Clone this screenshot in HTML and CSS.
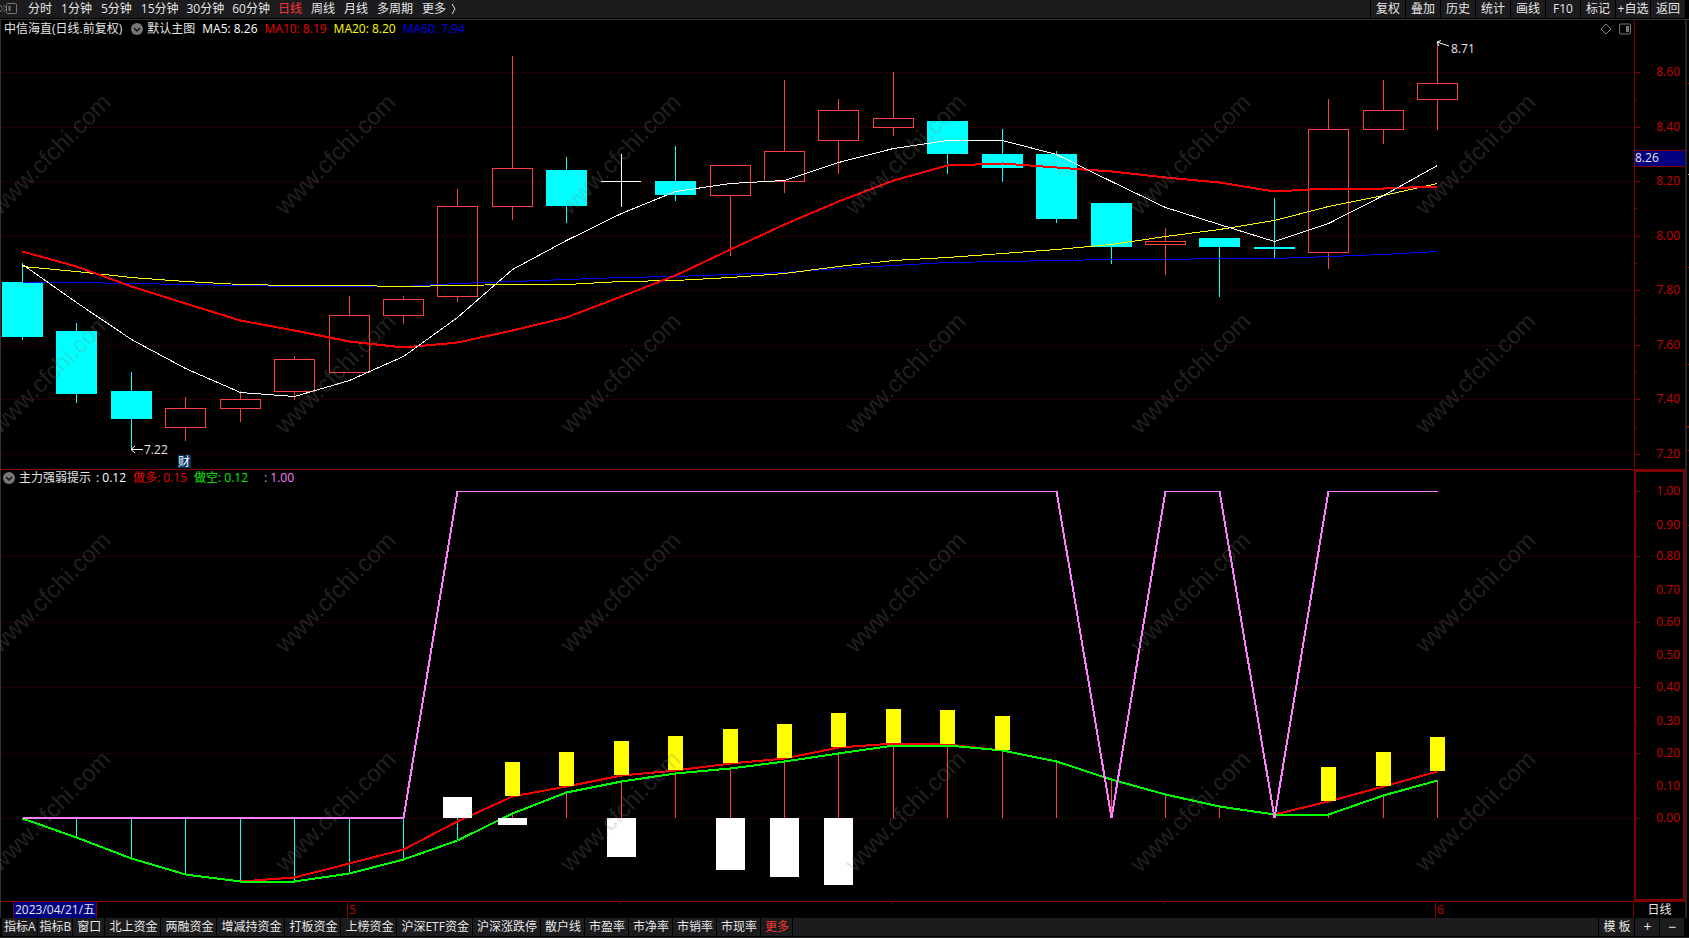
FILE: index.html
```html
<!DOCTYPE html>
<html lang="zh-CN">
<head>
    <meta charset="UTF-8">
    <meta name="viewport" content="width=device-width, initial-scale=1.0">
    <title>中信海直 日线</title>
    <link rel="stylesheet" href="styles.css">
</head>
<body>
    <div class="app">
        <header class="topbar">
            <button class="dock-btn" aria-label="展开侧栏">
                <svg width="18" height="14" viewBox="0 0 18 14" fill="none" stroke="#777">
                    <path d="M0 3l3 3.500-3 3.500M3.500 3l3 3.500-3 3.500"/>
                    <rect x="6.500" y="1.500" width="10" height="10" rx="1"/>
                    <path d="M9.500 4v5" stroke-width="2"/>
                </svg>
            </button>
            <nav class="periods">
                <button>分时</button>
                <button>1分钟</button>
                <button>5分钟</button>
                <button class="wide">15分钟</button>
                <button class="wide">30分钟</button>
                <button class="wide">60分钟</button>
                <button class="active">日线</button>
                <button>周线</button>
                <button>月线</button>
                <button>多周期</button>
                <button class="more">更多
                    <svg width="6" height="10" viewBox="0 0 6 10" fill="none" stroke="#ddd"><path d="M1 0l3 5-3 5"/></svg>
                </button>
            </nav>
            <div class="tools">
                <button>复权</button>
                <button>叠加</button>
                <button>历史</button>
                <button>统计</button>
                <button>画线</button>
                <button>F10</button>
                <button>标记</button>
                <button>+自选</button>
                <button>返回</button>
            </div>
        </header>

        <div class="workspace">
            <main class="panels">
                <section class="panel price-panel">
                    <div class="plot" id="price-plot">
                        <div class="legend">
                            <span class="stock">中信海直(日线.前复权)</span>
                            <button class="toggle" aria-label="主图指标">
                                <svg width="12" height="12" viewBox="0 0 12 12"><circle cx="6" cy="6" r="6" fill="#777"/><path d="M3 5l3 3 3-3" fill="none" stroke="#111" stroke-width="1.500"/></svg>
                            </button>
                            <span class="name">默认主图</span>
                            <span class="white">MA5: 8.26</span>
                            <span class="red">MA10: 8.19</span>
                            <span class="yellow">MA20: 8.20</span>
                            <span class="blue">MA60: 7.94</span>
                        </div>
                        <div class="plot-icons">
                            <button aria-label="标记点">
                                <svg width="12" height="12" viewBox="0 0 12 12" fill="none" stroke="#888"><path d="M6 1l5 5-5 5-5-5z"/></svg>
                            </button>
                            <button aria-label="侧栏">
                                <svg width="12" height="12" viewBox="0 0 12 12" fill="none" stroke="#777"><rect x=".5" y="1" width="11" height="10" rx="1"/><path d="M8.500 3v6" stroke-width="3"/></svg>
                            </button>
                        </div>
                    </div>
                    <div class="axis" id="price-axis"></div>
                </section>

                <section class="panel signal-panel">
                    <div class="plot" id="signal-plot">
                        <div class="legend signal-legend">
                            <button class="toggle" aria-label="副图指标">
                                <svg width="12" height="12" viewBox="0 0 12 12"><circle cx="6" cy="6" r="6" fill="#777"/><path d="M3 5l3 3 3-3" fill="none" stroke="#111" stroke-width="1.500"/></svg>
                            </button>
                            <span class="name">主力强弱提示</span>
                            <span class="white">: 0.12</span>
                            <span class="red">做多: 0.15</span>
                            <span class="green">做空: 0.12</span>
                            <span class="pink">: 1.00</span>
                        </div>
                    </div>
                    <div class="axis" id="signal-axis"></div>
                </section>

                <div class="date-row">
                    <div class="dates" id="dates">
                        <span class="cursor-date">2023/04/21/五</span>
                    </div>
                    <div class="period-label">日线</div>
                </div>
            </main>
            <aside class="edge" id="edge"></aside>
        </div>

        <footer class="bottombar">
            <button class="tight">指标A</button>
            <button class="tight">指标B</button>
            <button>窗口</button>
            <button>北上资金</button>
            <button>两融资金</button>
            <button>增减持资金</button>
            <button>打板资金</button>
            <button>上榜资金</button>
            <button>沪深ETF资金</button>
            <button>沪深涨跌停</button>
            <button>散户线</button>
            <button>市盈率</button>
            <button>市净率</button>
            <button>市销率</button>
            <button>市现率</button>
            <button class="active">更多</button>
            <span class="filler"></span>
            <button class="template">模 板</button>
            <button class="zoom" aria-label="放大">+</button>
            <button class="zoom" aria-label="缩小">−</button>
        </footer>

        <svg class="watermark" aria-hidden="true">
            <defs>
                <pattern id="mark" x="-15" y="2" width="285" height="219" patternUnits="userSpaceOnUse">
                    <text x="15" y="214" transform="rotate(-45 15 214)">www.cfchi.com</text>
                </pattern>
            </defs>
            <rect width="100%" height="100%" fill="url(#mark)"/>
        </svg>
    </div>

    <script src="chart.js"></script>
</body>
</html>
```

FILE: styles.css
```css
* {
    box-sizing: border-box;
}
body {
    margin: 0;
    background-color: #000;
    color: #e6e6e6;
    font-family: "Open Sans", "Noto Sans CJK SC", sans-serif;
    font-size: 12px;
    line-height: 16px;
}
button {
    margin: 0;
    padding: 0;
    border: none;
    background: none;
    color: inherit;
    font: inherit;
    white-space: nowrap;
    cursor: pointer;
}
button:hover {
    color: #fff;
}
.app {
    position: relative;
    display: flex;
    flex-direction: column;
    height: 100vh;
    overflow: hidden;
}

/* top toolbar */
.topbar {
    display: flex;
    height: 20px;
    padding-bottom: 1px;
    border-bottom: 1px solid #333;
}
.dock-btn {
    display: flex;
    align-items: center;
    width: 24px;
    background-color: #1c1c1e;
}
.periods {
    display: flex;
    flex: 1;
    background-color: #1c1c1e;
}
.periods button {
    padding: 0 4px;
    margin-right: 1px;
}
.periods .wide {
    margin-right: 0;
}
.periods .more {
    display: flex;
    align-items: center;
    gap: 5px;
}
.periods .active,
.bottombar .active {
    color: #ff3434;
}
.tools {
    display: flex;
    gap: 1px;
    padding-left: 1px;
    margin-right: 4px;
}
.tools button {
    width: 34px;
    background-color: #1c1c1e;
}

/* charts */
.workspace {
    display: flex;
    flex: 1;
    min-height: 0;
}
.panels {
    display: grid;
    grid-template-rows: minmax(0, 449fr) minmax(0, 433fr) 16px;
    flex: 1;
    min-width: 0;
    border-left: 1px solid #333;
}
.panel {
    display: grid;
    grid-template-columns: minmax(0, 1fr) 51px;
    min-height: 0;
}
.plot {
    position: relative;
    overflow: hidden;
}
.plot > svg,
.axis > svg {
    display: block;
}
.axis {
    overflow: hidden;
}
.price-panel .axis {
    border-left: 1px solid #800000;
}
.signal-panel {
    border-top: 1px solid #800000;
    border-bottom: 1px solid #800000;
}
.signal-panel .axis {
    box-shadow: inset 0 0 0 2px #800000;
}
.legend {
    position: absolute;
    top: 1px;
    left: 3px;
    display: flex;
    align-items: center;
    gap: 7px;
    white-space: nowrap;
}
.legend .stock {
    margin-right: 2px;
}
.legend .name {
    margin-left: -3px;
}
.signal-legend {
    top: 0;
    left: 2px;
}
.signal-legend .white {
    margin-left: -2px;
}
.signal-legend .pink {
    margin-left: 9px;
}
.toggle,
.plot-icons button {
    display: flex;
}
.white { color: #fff; }
.red { color: #f00000; }
.yellow { color: #ffff00; }
.blue { color: #0000e6; }
.green { color: #00f000; }
.pink { color: #ff80ff; }
.plot-icons {
    position: absolute;
    top: 3px;
    right: 3px;
    display: flex;
    gap: 7px;
}
svg text {
    font-size: 12px;
}
.axis-text {
    fill: #cc0000;
    text-anchor: end;
}
.note {
    fill: #e6e6e6;
}

/* date row */
.date-row {
    display: grid;
    grid-template-columns: minmax(0, 1fr) 51px;
}
.dates {
    position: relative;
    border-right: 1px solid #800000;
}
.cursor-date {
    display: inline-block;
    margin-left: 12px;
    padding: 0 1px;
    background-color: #000080;
    border-left: 1px solid #800000;
    border-right: 1px solid #800000;
}
.dates svg {
    position: absolute;
    inset: 0;
}
.month {
    fill: #cc0000;
}
.period-label {
    text-align: center;
}
.edge {
    width: 4px;
    border-left: 2px solid #252525;
}

/* bottom toolbar */
.bottombar {
    display: flex;
    gap: 1px;
    height: 20px;
    padding: 0 5px 1px 2px;
    border-bottom: 1px solid #2a2a2a;
}
.bottombar button,
.filler {
    background-color: #1c1c1e;
    padding: 0 3px 0 4px;
}
.bottombar .tight {
    padding: 0 1px 0 2px;
}
.bottombar .filler {
    flex: 1;
}
.bottombar .template {
    width: 35px;
}
.bottombar .zoom {
    width: 24px;
    font-size: 14px;
}

.watermark {
    position: absolute;
    inset: 0;
    width: 100%;
    height: 100%;
    pointer-events: none;
}
.watermark text {
    font-family: "Liberation Sans", Arial, sans-serif;
    font-size: 24px;
    fill: rgba(128, 128, 128, 0.25);
}
```

FILE: chart.js
```javascript
// open, close, high, low
const candles = [
    [7.83, 7.63, 7.90, 7.62], [7.65, 7.42, 7.68, 7.39], [7.43, 7.33, 7.50, 7.22],
    [7.30, 7.37, 7.41, 7.25], [7.37, 7.40, 7.43, 7.32], [7.43, 7.55, 7.56, 7.40],
    [7.50, 7.71, 7.78, 7.50], [7.71, 7.77, 7.78, 7.68], [7.78, 8.11, 8.17, 7.76],
    [8.11, 8.25, 8.66, 8.06], [8.24, 8.11, 8.29, 8.05], [8.20, 8.20, 8.30, 8.11],
    [8.20, 8.15, 8.33, 8.13], [8.15, 8.26, 8.26, 7.93], [8.20, 8.31, 8.57, 8.16],
    [8.35, 8.46, 8.50, 8.23], [8.40, 8.43, 8.60, 8.37], [8.42, 8.30, 8.42, 8.23],
    [8.30, 8.25, 8.39, 8.20], [8.30, 8.06, 8.31, 8.05], [8.12, 7.96, 8.12, 7.90],
    [7.97, 7.98, 8.03, 7.86], [7.99, 7.96, 7.99, 7.78], [7.96, 7.95, 8.14, 7.92],
    [7.94, 8.39, 8.50, 7.88], [8.39, 8.46, 8.57, 8.34], [8.50, 8.56, 8.71, 8.39]
];

const ma5 = [7.897, 7.757, 7.622, 7.515, 7.427, 7.413, 7.471, 7.559, 7.702, 7.878, 7.984, 8.083, 8.164, 8.193,
    8.204, 8.27, 8.322, 8.351, 8.351, 8.30, 8.20, 8.105, 8.043, 7.981, 8.047, 8.149, 8.26];
const ma10 = [7.944, 7.889, 7.816, 7.754, 7.691, 7.655, 7.614, 7.592, 7.611, 7.655, 7.702, 7.779, 7.856, 7.951,
    8.043, 8.127, 8.204, 8.259, 8.267, 8.252, 8.237, 8.215, 8.197, 8.164, 8.175, 8.175, 8.182];
const ma20 = [7.889, 7.871, 7.849, 7.834, 7.823, 7.819, 7.819, 7.816, 7.819, 7.823, 7.823, 7.834, 7.839, 7.849,
    7.863, 7.889, 7.911, 7.922, 7.937, 7.951, 7.97, 7.999, 8.025, 8.058, 8.109, 8.149, 8.193];
const ma60 = [7.83, 7.83, 7.827, 7.823, 7.819, 7.816, 7.816, 7.816, 7.827, 7.834, 7.841, 7.849, 7.852, 7.86,
    7.867, 7.882, 7.893, 7.904, 7.907, 7.911, 7.915, 7.915, 7.918, 7.918, 7.926, 7.933, 7.944];

const shortLine = [0, -.058, -.122, -.171, -.193, -.194, -.168, -.125, -.067, .015, .08, .113, .138, .153,
    .174, .199, .223, .223, .208, .173, .119, .072, .038, .012, .012, .07, .116];
const longLine = [0, -.058, -.122, -.171, -.193, -.18, -.138, -.095, -.009, .067, .098, .132, .147, .167,
    .183, .217, .229, .226, .208, .173, .119, .072, .038, .012, .052, .098, .144];
const state = [0, 0, 0, 0, 0, 0, 0, 0, 1, 1, 1, 1, 1, 1, 1, 1, 1, 1, 1, 1, 0, 1, 1, 0, 1, 1, 1];
const yellowBars = [9, 10, 11, 12, 13, 14, 15, 16, 17, 18, 24, 25, 26];
const whiteBars = { 8: .064, 9: -.021, 11: -.119, 13: -.159, 14: -.18, 15: -.205 };

const UP = '#ff4040';
const DOWN = '#00ffff';
const LINE = '#800000';

function makeSvg(host) {
    const old = host.querySelector(':scope > svg');
    if (old) old.remove();
    const svg = document.createElementNS('http://www.w3.org/2000/svg', 'svg');
    svg.setAttribute('width', host.clientWidth);
    svg.setAttribute('height', host.clientHeight);
    host.prepend(svg);
    return svg;
}

function add(svg, tag, attrs, text) {
    const el = document.createElementNS('http://www.w3.org/2000/svg', tag);
    for (const key in attrs) el.setAttribute(key, attrs[key]);
    if (text !== undefined) el.textContent = text;
    svg.appendChild(el);
    return el;
}

function box(svg, x, y, width, height, fill) {
    add(svg, 'rect', { x, y, width, height, fill });
}

function gridLine(svg, y, width) {
    add(svg, 'line', { x1: 1, x2: width, y1: y + 0.5, y2: y + 0.5, stroke: LINE, 'stroke-dasharray': '1 3' });
}

function curve(svg, values, y, width, stroke, size) {
    const points = values.map((v, i) => xAt(i, width) + 0.5 + ',' + (y(v) + 0.5)).join(' ');
    add(svg, 'polyline', { points, stroke, fill: 'none', 'stroke-width': size, 'shape-rendering': 'crispEdges' });
}

function xAt(i, width) {
    return Math.round(21 + i * width / 30.003);
}

function scale(max, min, height) {
    return v => Math.round((max - v) / (max - min) * height);
}

function drawPrice() {
    const host = document.getElementById('price-plot');
    const svg = makeSvg(host);
    const w = host.clientWidth;
    const y = scale(8.7905, 7.1453, host.clientHeight);

    for (let i = 0; i < 8; i++) gridLine(svg, y(7.2 + i * 0.2), w);

    candles.forEach(([open, close, high, low], i) => {
        const x = xAt(i, w);
        const top = y(Math.max(open, close));
        const bottom = y(Math.min(open, close));
        if (open === close) {
            box(svg, x, y(high), 1, y(low) - y(high) + 1, '#fff');
            box(svg, x - 20, top, 40, 1, '#fff');
        } else if (close > open) {
            box(svg, x, y(high), 1, top - y(high), UP);
            box(svg, x, bottom, 1, y(low) - bottom + 1, UP);
            add(svg, 'rect', { x: x - 19.5, y: top + 0.5, width: 40, height: bottom - top, fill: 'none', stroke: UP });
        } else {
            box(svg, x, y(high), 1, y(low) - y(high) + 1, DOWN);
            box(svg, x - 20, top, 41, bottom - top, DOWN);
        }
    });

    curve(svg, ma60, y, w, '#0000ff', 1);
    curve(svg, ma20, y, w, '#ffff00', 1);
    curve(svg, ma10, y, w, '#ff0000', 2);
    curve(svg, ma5, y, w, '#ffffff', 1);

    // lowest and highest price notes
    const lx = xAt(2, w), ly = y(7.22);
    add(svg, 'path', { d: `M${lx + 12} ${ly + 0.5}H${lx}M${lx + 4} ${ly - 3}l-4 3.5 4 3.5`, stroke: '#fff', fill: 'none' });
    add(svg, 'text', { x: lx + 13, y: ly + 5, class: 'note' }, '7.22');
    const hx = xAt(26, w), hy = y(8.71);
    add(svg, 'path', { d: `M${hx + 12} ${hy + 4}L${hx} ${hy}M${hx + 4} ${hy - 1.5}L${hx} ${hy}l2 4`, stroke: '#fff', fill: 'none' });
    add(svg, 'text', { x: hx + 14, y: hy + 11, class: 'note' }, '8.71');

    const fx = xAt(3, w);
    box(svg, fx - 7, y(7.2) + 1, 13, 13, '#003366');
    add(svg, 'text', { x: fx - 7, y: y(7.2) + 12, fill: '#fff' }, '财');

    const axisHost = document.getElementById('price-axis');
    const axis = makeSvg(axisHost);
    for (let i = 0; i < 8; i++) {
        const value = 7.2 + i * 0.2;
        box(axis, 0, y(value), 5, 1, LINE);
        if (i < 7) box(axis, 0, y(value + 0.1), 2, 1, LINE);
        add(axis, 'text', { x: 45, y: y(value) + 4, class: 'axis-text' }, value.toFixed(2));
    }
    const last = y(8.26);
    box(axis, 0, last - 15, 50, 17, LINE);
    box(axis, 0, last - 14, 50, 15, '#000080');
    add(axis, 'text', { x: 0, y: last - 3, class: 'note' }, '8.26');
}

function drawSignal() {
    const host = document.getElementById('signal-plot');
    const svg = makeSvg(host);
    const w = host.clientWidth;
    const y = scale(1.0642, -0.2538, host.clientHeight);
    const zero = y(0);

    for (let i = 0; i < 5; i++) gridLine(svg, y(i * 0.2), w);

    shortLine.forEach((v, i) => {
        const top = Math.min(zero, y(v));
        box(svg, xAt(i, w), top, 1, Math.abs(y(v) - zero), v < 0 ? DOWN : UP);
    });

    curve(svg, longLine, y, w, '#ff0000', 2);
    curve(svg, shortLine, y, w, '#00ff00', 2);

    for (const i in whiteBars) {
        const v = whiteBars[i];
        box(svg, xAt(+i, w) - 14, Math.min(zero, y(v)), 29, Math.abs(y(v) - zero), '#fff');
    }
    for (const i of yellowBars) {
        const bottom = y(longLine[i]);
        box(svg, xAt(i, w) - 7, y(longLine[i] + 0.104), 15, bottom - y(longLine[i] + 0.104), '#ffff00');
    }
    // pink line is doubled where it rises, falls or rests on zero
    for (let i = 1; i < state.length; i++) {
        const flatTop = state[i] && state[i - 1];
        add(svg, 'line', {
            x1: xAt(i - 1, w) + 0.5, y1: y(state[i - 1]) + (flatTop ? 0.5 : 0),
            x2: xAt(i, w) + 0.5, y2: y(state[i]) + (flatTop ? 0.5 : 0),
            stroke: '#ff80ff', 'stroke-width': flatTop ? 1 : 2, 'shape-rendering': 'crispEdges'
        });
    }

    const axis = makeSvg(document.getElementById('signal-axis'));
    for (let i = 0; i <= 10; i++) {
        box(axis, 0, y(i / 10), i % 2 ? 3 : 6, 1, LINE);
        add(axis, 'text', { x: 46, y: y(i / 10) + (i % 2 ? 5 : 4), class: 'axis-text' }, (i / 10).toFixed(2));
    }
}

function drawDates() {
    const host = document.getElementById('dates');
    const svg = makeSvg(host);
    const w = host.clientWidth;
    for (const i of [11, 16, 21]) box(svg, xAt(i, w) - 1, 0, 1, 2, LINE);
    for (const [i, month] of [[6, '5'], [26, '6']]) {
        box(svg, xAt(i, w) - 1, 0, 1, 16, LINE);
        add(svg, 'text', { x: xAt(i, w) + 1, y: 12, class: 'month' }, month);
    }
}

// slivers of the neighbouring quote list along the right edge
function drawEdge() {
    const host = document.getElementById('edge');
    const svg = makeSvg(host);
    const h = host.clientHeight;
    for (const part of [7, 27.5, 38.3, 47.9, 56.2]) {
        box(svg, 0, Math.round(h * part / 100), 2, 1, LINE);
    }
    box(svg, 0, Math.round(h * 0.452), 2, 2, LINE);
    box(svg, 1, Math.round(h * 0.172), 1, 1, '#e0a030');
}

function draw() {
    drawPrice();
    drawSignal();
    drawDates();
    drawEdge();
}

window.addEventListener('resize', draw);
draw();
```
